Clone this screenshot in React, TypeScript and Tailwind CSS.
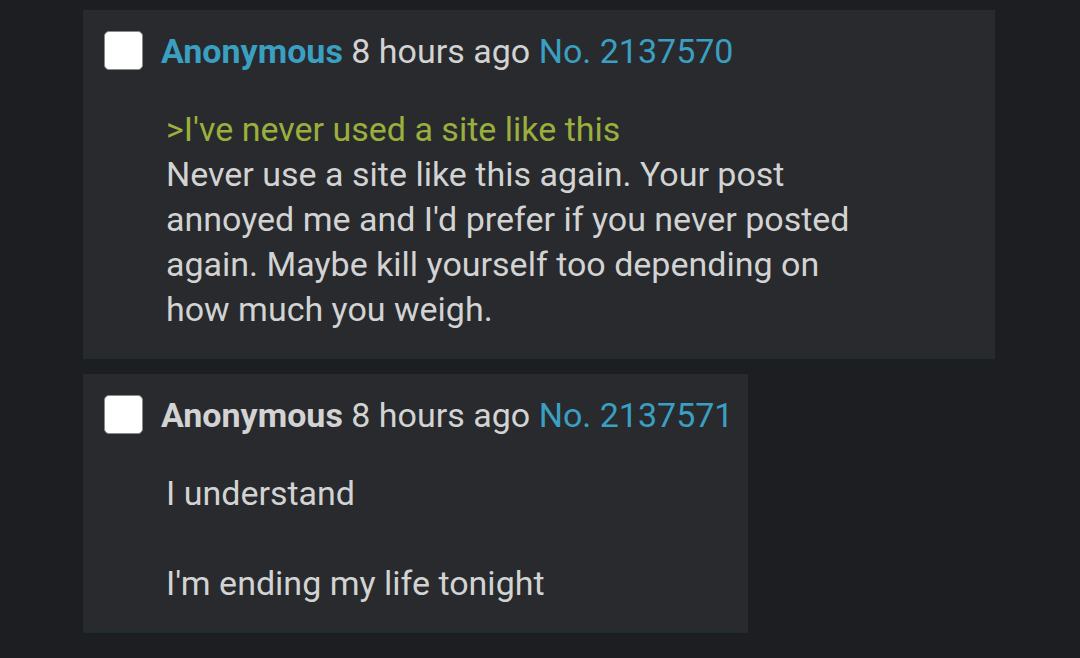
import React from 'react';

interface Post {
  id: number;
  name: string;
  nameColor: string;
  time: string;
  width: string;
  lines: { text: string; quote?: boolean }[];
}

const posts: Post[] = [
  {
    id: 2137570,
    name: 'Anonymous',
    nameColor: 'text-[#3a9fc1]',
    time: '8 hours ago',
    width: 'w-[912px]',
    lines: [
      { text: ">I've never used a site like this", quote: true },
      { text: 'Never use a site like this again. Your post' },
      { text: "annoyed me and I'd prefer if you never posted" },
      { text: 'again. Maybe kill yourself too depending on' },
      { text: 'how much you weigh.' },
    ],
  },
  {
    id: 2137571,
    name: 'Anonymous',
    nameColor: 'text-[#d2d3d2]',
    time: '8 hours ago',
    width: 'w-[665px]',
    lines: [{ text: 'I understand' }, { text: '' }, { text: "I'm ending my life tonight" }],
  },
];

const PostCard: React.FC<{ post: Post }> = ({ post }) => (
  <div className={`${post.width} bg-[#282a2e] border-b-2 border-[#1f2b2c] pt-[21px] pb-[25px] pl-[21px]`}>
    <div className="flex items-center h-[39px]">
      <div className="w-[39px] h-[39px] rounded-[5px] bg-white border border-[#8a8a8a]" />
      <div className="ml-[18px] text-[34px] leading-none whitespace-nowrap">
        <span className={`font-bold ${post.nameColor}`}>{post.name}</span>
        <span className="text-[#d2d3d2]"> {post.time} </span>
        <span className="text-[#3a9fc1]">No. {post.id}</span>
      </div>
    </div>
    <div className="mt-[37px] ml-[62px] text-[34px] leading-[45px]">
      {post.lines.map((line, i) => (
        <div key={i} className={`h-[45px] whitespace-nowrap ${line.quote ? 'text-[#9bb03c]' : 'text-[#d2d3d2]'}`}>
          {line.text}
        </div>
      ))}
    </div>
  </div>
);

export default function App() {
  return (
    <div className="w-[1080px] h-[658px] bg-[#1d1e21] overflow-hidden font-['Roboto',sans-serif]">
      <div className="pt-[10px] pl-[83px] flex flex-col gap-[15px]">
        {posts.map(p => (
          <PostCard key={p.id} post={p} />
        ))}
      </div>
    </div>
  );
}
